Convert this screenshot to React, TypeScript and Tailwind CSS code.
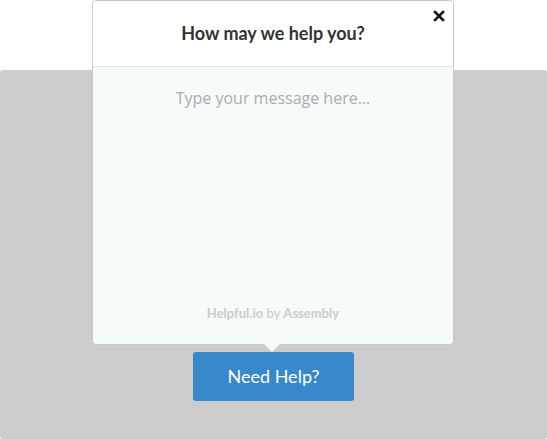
import { useState } from "react";

export default function App() {
  const [message, setMessage] = useState("");

  return (
    <div className="relative h-[439px] w-[547px] overflow-hidden bg-white font-['Lato',sans-serif]">
      <div className="mt-[70px] flex h-[369px] flex-col items-center justify-end rounded-[3px] bg-[#cccccc] pb-[38px]">
        <button
          type="button"
          className="h-[49px] w-[161px] rounded-[3px] bg-[#3889cc] text-[18px] text-white"
        >
          Need Help?
        </button>
      </div>

      <div className="absolute left-[92px] top-0 flex h-[345px] w-[362px] flex-col rounded-[4px] border border-[#c8c8c8] bg-[#f5fafa]">
        <div className="relative flex h-[66px] shrink-0 items-center justify-center rounded-t-[4px] border-b border-[#e2e6e6] bg-white">
          <h2 className="text-[18px] font-bold text-[#333333]">How may we help you?</h2>
          <button type="button" className="absolute right-[8px] top-[9px] p-0">
            <svg width="12" height="12" viewBox="0 0 12 12">
              <path d="M2 2 L10 10 M10 2 L2 10" stroke="#111" strokeWidth="2.6" strokeLinecap="square" />
            </svg>
          </button>
        </div>
        <textarea
          value={message}
          onChange={(event) => setMessage(event.target.value)}
          placeholder="Type your message here..."
          className="flex-1 resize-none bg-transparent px-4 pt-[19px] text-center font-['Open_Sans',sans-serif] text-[16px] text-[#555] placeholder:text-[#a9adad] focus:outline-none"
        />
        <p className="pb-[21px] text-center text-[13px] text-[#c9cccc]">
          <span className="font-bold">Helpful.io</span> by <span className="font-bold">Assembly</span>
        </p>
        <div className="absolute left-[171px] top-full h-0 w-0 border-x-[8px] border-t-[8px] border-x-transparent border-t-[#f5fafa]" />
      </div>
    </div>
  );
}
